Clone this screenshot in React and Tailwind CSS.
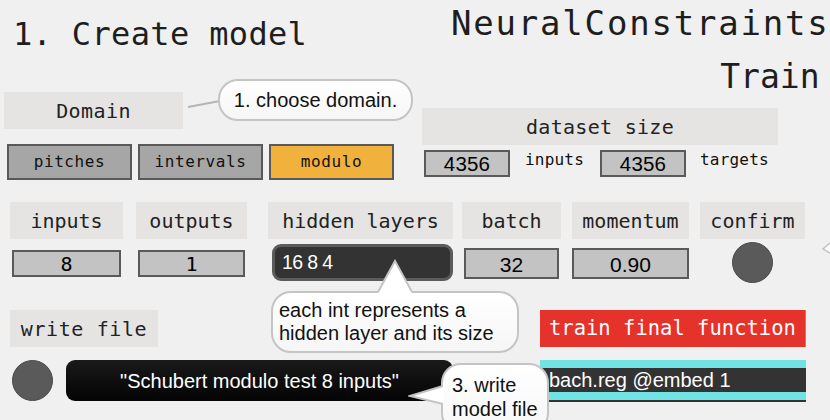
import React from "react";

const mono = "font-['DejaVu_Sans_Mono',monospace]";
const sans = "font-['Liberation_Sans',Arial,sans-serif]";

function Label({ className = "", children }) {
  return (
    <div
      className={`flex h-[37px] shrink-0 items-center justify-center bg-[#e5e4e3] text-[20px] leading-none text-[#222] ${mono} ${className}`}
    >
      {children}
    </div>
  );
}

function NumBox({ className = "", children, font = sans, size = "text-[21px]" }) {
  return (
    <div
      className={`flex shrink-0 items-center justify-center border-2 border-[#5a5a5a] bg-[#c3c3c3] leading-none text-black ${size} ${font} ${className}`}
    >
      {children}
    </div>
  );
}

function Toggle({ children, active }) {
  return (
    <div
      className={`flex h-[36px] w-[125px] items-center justify-center border-2 border-[#595959] text-[16px] leading-none tracking-[0.6px] text-[#111] ${mono} ${
        active ? "bg-[#f0b13d]" : "bg-[#a6a6a6]"
      }`}
    >
      {children}
    </div>
  );
}

function Bang({ className = "" }) {
  return (
    <div
      className={`h-[41px] w-[41px] shrink-0 rounded-full border border-[#4a4a4a] bg-[#5a5a5a] ${className}`}
    />
  );
}

const bubble =
  "rounded-[20px] border-2 border-[#c4c4c4] bg-gradient-to-b from-white to-[#f6f6f6] text-[20px] text-[#111]";

export default function App() {
  return (
    <div className="relative h-[420px] w-[830px] overflow-hidden bg-[#f0f0f0]">
      {/* Titles */}
      <div
        className={`absolute left-[13px] top-[18px] whitespace-nowrap text-[32px] leading-none tracking-[0.35px] text-[#1e1e1e] ${mono}`}
      >
        1. Create model
      </div>
      <div
        className={`absolute left-[451px] top-[6px] flex flex-col items-end gap-[20px] whitespace-nowrap text-[34px] leading-none text-[#1e1e1e] ${mono}`}
      >
        <span className="tracking-[1.8px]">NeuralConstraints</span>
        <span className="mr-[10px] text-[33px]">Train</span>
      </div>

      {/* Domain */}
      <div className="absolute left-[4px] top-[92px]">
        <Label className="w-[179px] tracking-[0.4px]">Domain</Label>
      </div>
      <svg className="absolute left-[186px] top-[98px]" width="36" height="12" viewBox="0 0 36 12">
        <line x1="2" y1="9" x2="34" y2="3" stroke="#b5b5b5" strokeWidth="2" />
      </svg>
      <div
        className={`absolute left-[218px] top-[79px] flex h-[42px] w-[195px] items-center justify-center leading-none ${bubble} ${sans}`}
      >
        1. choose domain.
      </div>

      <div className="absolute left-[7px] top-[144px] flex gap-[6px]">
        <Toggle>pitches</Toggle>
        <Toggle>intervals</Toggle>
        <Toggle active>modulo</Toggle>
      </div>

      {/* dataset size */}
      <div className="absolute left-[422px] top-[108px] flex w-[356px] flex-col gap-[5px]">
        <Label className="tracking-[0.3px]">dataset size</Label>
        <div className={`flex items-start pl-[2px] text-[16px] leading-none tracking-[0.2px] text-[#111] ${mono}`}>
          <NumBox className="h-[27px] w-[86px] pt-[2px]" size="text-[20.5px]">
            4356
          </NumBox>
          <span className="w-[90px] pl-[15px] pt-[2px]">inputs</span>
          <NumBox className="h-[27px] w-[86px] pt-[2px]" size="text-[20.5px]">
            4356
          </NumBox>
          <span className="pl-[14px] pt-[2px]">targets</span>
        </div>
      </div>

      {/* parameter row */}
      <div className="absolute left-[10px] top-[202px] flex items-start">
        <div className="flex w-[113px] flex-col items-center gap-[11px]">
          <Label className="w-full">inputs</Label>
          <NumBox className="h-[27px] w-[109px] pt-[1px]" font={mono} size="text-[20px]">
            8
          </NumBox>
        </div>
        <div className="ml-[13px] flex w-[111px] flex-col items-center gap-[11px]">
          <Label className="w-full">outputs</Label>
          <NumBox className="h-[27px] w-[107px] pt-[1px]" font={mono} size="text-[20px]">
            1
          </NumBox>
        </div>
        <div className="ml-[21px] flex w-[185px] flex-col gap-[5px] pl-[4px]">
          <Label className="-ml-[4px] w-[185px]">hidden layers</Label>
          <div
            className={`flex h-[37px] w-[181px] items-center rounded-[9px] border-[3px] border-[#5b5b5b] bg-[#333333] pl-[7px] text-[19.5px] leading-none tracking-[-0.6px] text-white ${sans}`}
          >
            16 8 4
          </div>
        </div>
        <div className="ml-[9px] flex w-[99px] flex-col items-center gap-[9px]">
          <Label className="w-full">batch</Label>
          <NumBox className="h-[31px] w-[95px] pt-[2px]">32</NumBox>
        </div>
        <div className="ml-[11px] flex w-[117px] flex-col items-center gap-[9px]">
          <Label className="w-full">momentum</Label>
          <NumBox className="h-[31px] w-[117px] pt-[2px]">0.90</NumBox>
        </div>
        <div className="ml-[11px] flex w-[105px] flex-col items-center gap-[3px]">
          <Label className="w-full">confirm</Label>
          <Bang />
        </div>
      </div>

      {/* right edge tip */}
      <svg className="absolute left-[818px] top-[240px]" width="12" height="20" viewBox="0 0 12 20">
        <polyline points="12,3 5,9 12,13" fill="#fdfdfd" stroke="#c4c4c4" strokeWidth="1.5" />
      </svg>

      {/* hidden layers comment bubble */}
      <div
        className={`absolute left-[271px] top-[291px] flex h-[62px] w-[248px] flex-col justify-center pl-[6px] leading-[23px] ${bubble} ${sans}`}
      >
        <span>each int represents a</span>
        <span>hidden layer and its size</span>
      </div>
      <svg className="absolute left-[376px] top-[259px]" width="38" height="36" viewBox="0 0 38 36">
        <polygon points="2,34 19,2 36,34" fill="#ffffff" />
        <polyline points="2,33 19,2 36,33" fill="none" stroke="#c4c4c4" strokeWidth="2" />
      </svg>

      {/* write file */}
      <div className="absolute left-[10px] top-[310px] flex flex-col items-start gap-[13px]">
        <Label className="w-[148px] tracking-[0.6px]">write file</Label>
        <div className="flex items-center gap-[13px] pl-[2px]">
          <Bang />
          <div
            className={`flex h-[41px] w-[387px] items-center justify-center rounded-[9px] bg-gradient-to-b from-[#1a1a1a] to-[#050505] text-[20px] leading-none text-white ${sans}`}
          >
            "Schubert modulo test 8 inputs"
          </div>
        </div>
      </div>

      {/* train final function */}
      <div className="absolute left-[540px] top-[310px] flex w-[266px] flex-col gap-[13px]">
        <div
          className={`flex h-[37px] items-center border-r border-[#f06a60] bg-[#e5322a] pl-[9px] text-[20.5px] leading-none text-white ${mono}`}
        >
          train final function
        </div>
        <div className="flex h-[42px] flex-col">
          <div className="h-[8px] bg-[#70e3e5]" />
          <div
            className={`flex h-[24px] items-center bg-[#333333] pl-[9px] text-[20px] leading-none text-white ${sans}`}
          >
            bach.reg @embed 1
          </div>
          <div className="h-[8px] bg-[#70e3e5]" />
          <div className="h-[2px] bg-[#333333]" />
        </div>
      </div>

      {/* 3. write model file bubble */}
      <div
        className={`absolute left-[441px] top-[363px] flex h-[70px] w-[108px] flex-col pl-[9px] pt-[8px] leading-[24px] ${bubble} ${sans}`}
      >
        <span>3. write</span>
        <span>model file</span>
      </div>
      <svg className="absolute left-[408px] top-[384px]" width="38" height="22" viewBox="0 0 38 22">
        <polygon points="36,2 2,12 36,20" fill="#ffffff" />
        <polyline points="35,2 2,12 35,20" fill="none" stroke="#c4c4c4" strokeWidth="2" />
      </svg>
    </div>
  );
}
